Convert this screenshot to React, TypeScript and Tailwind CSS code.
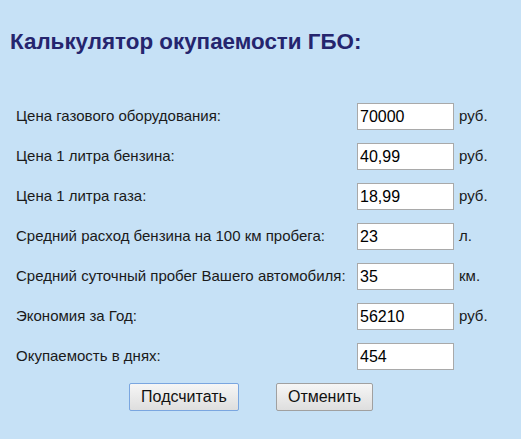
import React from 'react';

const rows: { label: string; value: string; unit: string }[] = [
  { label: 'Цена газового оборудования:', value: '70000', unit: 'руб.' },
  { label: 'Цена 1 литра бензина:', value: '40,99', unit: 'руб.' },
  { label: 'Цена 1 литра газа:', value: '18,99', unit: 'руб.' },
  { label: 'Средний расход бензина на 100 км пробега:', value: '23', unit: 'л.' },
  { label: 'Средний суточный пробег Вашего автомобиля:', value: '35', unit: 'км.' },
  { label: 'Экономия за Год:', value: '56210', unit: 'руб.' },
  { label: 'Окупаемость в днях:', value: '454', unit: '' },
];

export default function App() {
  return (
    <div className="min-h-screen bg-[#c6e1f6] font-['Liberation_Sans',Arial,sans-serif] text-[#1a1a1a]">
      {/* Header */}
      <h1 className="pl-[10px] pt-[28px] text-[22.4px] font-bold leading-[28px] text-[#25256e]">
        Калькулятор окупаемости ГБО:
      </h1>

      {/* Form rows */}
      <div className="mt-[47px] flex flex-col gap-[13px] pl-[16px]">
        {rows.map((r) => (
          <div key={r.label} className="flex items-center">
            <span className="w-[341px] text-[15px]">{r.label}</span>
            <input
              readOnly
              value={r.value}
              className="h-[27px] w-[97px] border border-[#a9a9a9] bg-white px-[2px] text-[16px] text-black outline-none"
            />
            <span className="ml-[5px] text-[15px]">{r.unit}</span>
          </div>
        ))}
      </div>

      {/* Buttons */}
      <div className="mt-[13px] flex pl-[129px]">
        <button className="h-[28px] w-[110px] rounded-[2px] border border-[#7aa6e0] bg-gradient-to-b from-[#f6f6f6] to-[#dedede] text-[16px] text-[#111]">
          Подсчитать
        </button>
        <button className="ml-[37px] h-[28px] w-[97px] rounded-[2px] border border-[#a0a0a0] bg-gradient-to-b from-[#f6f6f6] to-[#dedede] text-[16px] text-[#111]">
          Отменить
        </button>
      </div>
    </div>
  );
}
